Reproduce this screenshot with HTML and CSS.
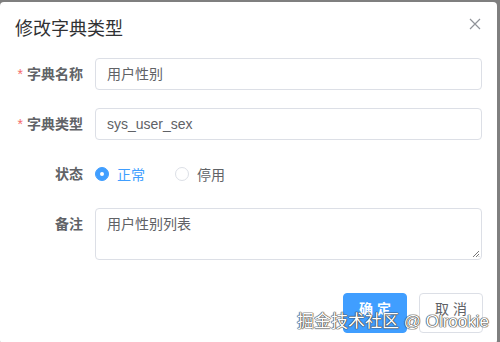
FILE: index.html
```html
<!DOCTYPE html>
<html>
<head>
<meta charset="utf-8">
<link rel="stylesheet" href="styles.css">
</head>
<body>
<div class="dialog">
  <div class="dialog-header">
    <span class="dialog-title">修改字典类型</span>
    <svg class="close" width="12" height="12" viewBox="0 0 12 12"><path d="M1 1L11 11M11 1L1 11" stroke="#909399" stroke-width="1.2" fill="none"/></svg>
  </div>
  <div class="form">
    <div class="form-item">
      <label class="label"><span class="req">*</span>字典名称</label>
      <div class="input">用户性别</div>
    </div>
    <div class="form-item">
      <label class="label"><span class="req">*</span>字典类型</label>
      <div class="input">sys_user_sex</div>
    </div>
    <div class="form-item">
      <label class="label">状态</label>
      <div class="radios">
        <span class="radio checked"><span class="dot"></span><span class="rtext">正常</span></span>
        <span class="radio"><span class="dot"></span><span class="rtext">停用</span></span>
      </div>
    </div>
    <div class="form-item">
      <label class="label">备注</label>
      <div class="textarea">用户性别列表
        <svg class="grip" width="8" height="8" viewBox="0 0 8 8"><path d="M7 1L1 7M7 4L4 7M7 6.5L6.5 7" stroke="#777" stroke-width="1" fill="none"/></svg>
      </div>
    </div>
  </div>
  <div class="footer">
    <button class="btn primary">确 定</button>
    <button class="btn">取 消</button>
  </div>
</div>
<div class="watermark">掘金技术社区 @ Olrookie</div>
</body>
</html>
```
FILE: styles.css
```css
* { box-sizing: border-box; }
html, body { margin: 0; padding: 0; }
body {
  width: 500px;
  height: 342px;
  background: #7f7f7f;
  font-family: "Liberation Sans", "Noto Sans CJK SC", sans-serif;
  position: relative;
  overflow: hidden;
  padding-top: 2px;
}
.dialog {
  width: 497px;
  height: 342px;
  background: #fff;
  border-radius: 4px;
}
.dialog-header {
  position: relative;
  padding: 15px 15px 0 15px;
  height: 56px;
}
.dialog-title {
  font-size: 18px;
  line-height: 24px;
  color: #303133;
}
.close {
  position: absolute;
  right: 16px;
  top: 16px;
}
.form {
  padding: 0 15px;
}
.form-item {
  display: flex;
  margin-bottom: 18px;
}
.label {
  width: 80px;
  flex: none;
  text-align: right;
  padding-right: 12px;
  font-size: 14px;
  font-weight: bold;
  line-height: 32px;
  color: #606266;
}
.req {
  color: #f56c6c;
  margin-right: 4px;
  font-weight: normal;
}
.input {
  flex: 1;
  height: 32px;
  border: 1px solid #dcdfe6;
  border-radius: 4px;
  padding: 0 11px;
  font-size: 14px;
  line-height: 30px;
  color: #606266;
}
.radios {
  display: flex;
  align-items: center;
  height: 32px;
}
.radio {
  display: flex;
  align-items: center;
  margin-right: 30px;
  font-size: 14px;
  color: #606266;
}
.dot {
  width: 14px;
  height: 14px;
  border-radius: 50%;
  border: 1px solid #dcdfe6;
  background: #fff;
  margin-right: 8px;
  position: relative;
}
.radio.checked .dot {
  background: #409eff;
  border-color: #409eff;
}
.radio.checked .dot::after {
  content: "";
  position: absolute;
  left: 4px;
  top: 4px;
  width: 4px;
  height: 4px;
  border-radius: 50%;
  background: #fff;
}
.radio.checked .rtext { color: #409eff; }
.textarea {
  flex: 1;
  height: 52px;
  border: 1px solid #dcdfe6;
  border-radius: 4px;
  padding: 5px 11px;
  font-size: 14px;
  line-height: 21px;
  color: #606266;
  position: relative;
}
.grip {
  position: absolute;
  right: 1px;
  bottom: 1px;
}
.footer {
  display: flex;
  justify-content: flex-end;
  padding: 15px 14px 0 0;
  gap: 12px;
}
.btn {
  width: 64px;
  height: 40px;
  border: 1px solid #dcdfe6;
  border-radius: 4px;
  background: #fff;
  color: #606266;
  font-family: inherit;
  font-size: 14px;
  padding: 0 0 10px 0;
}
.btn.primary {
  background: #409eff;
  border-color: #409eff;
  color: #fff;
  font-weight: bold;
}
.watermark {
  position: absolute;
  right: 11px;
  bottom: 10px;
  font-size: 17px;
  line-height: 20px;
  color: #fff;
  text-shadow: 0 0 1px #444, 0 0 1px #444, 0 0 1px #444, 0 0 1px #444;
}
```
